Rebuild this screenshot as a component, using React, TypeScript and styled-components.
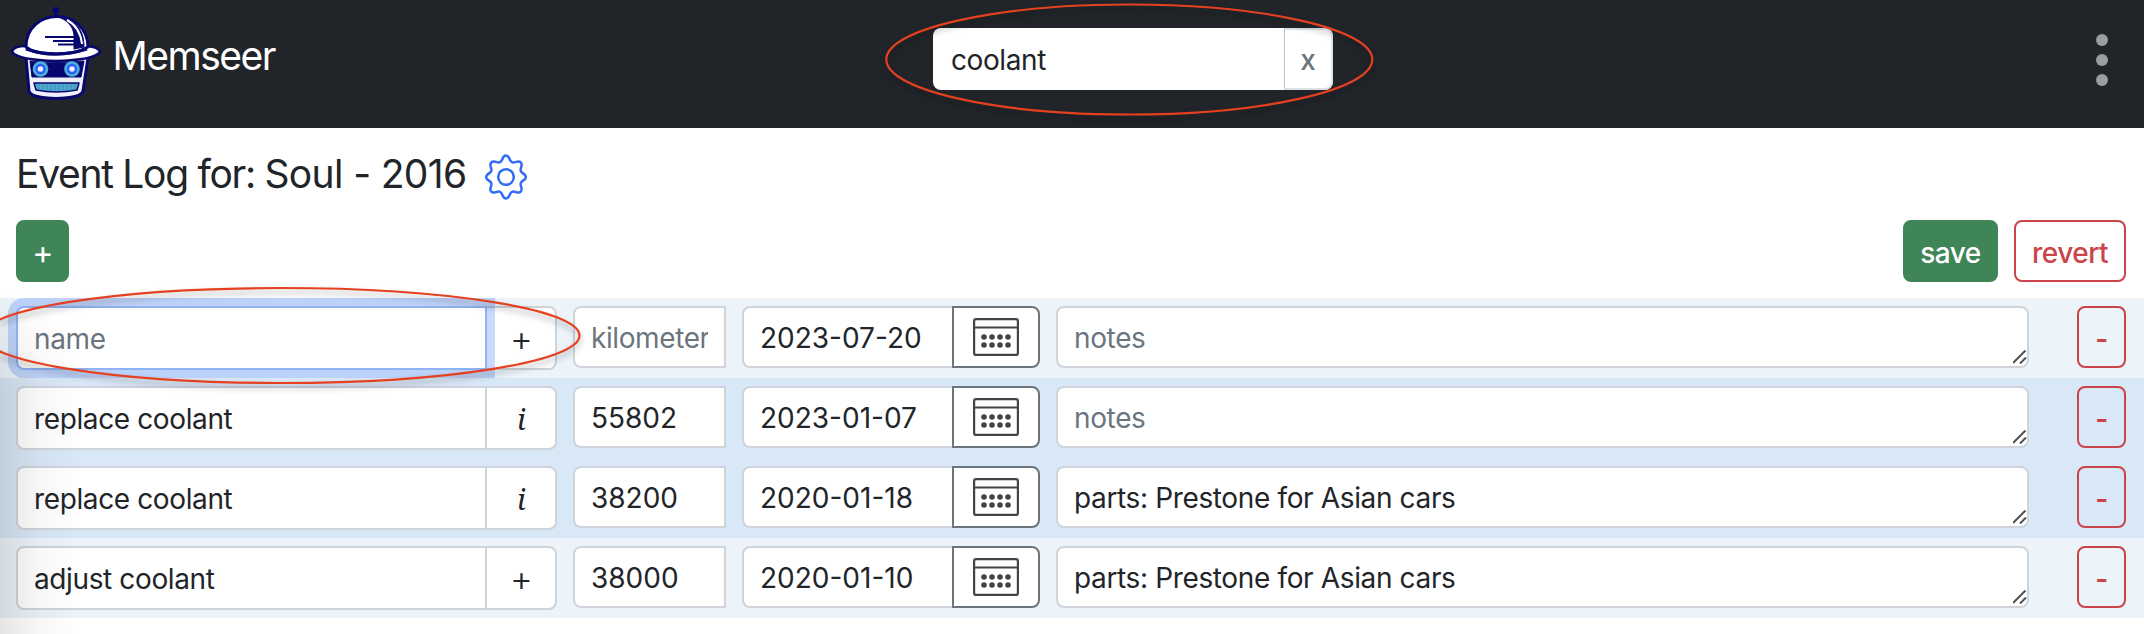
import React from 'react';
import styled, { createGlobalStyle, css } from 'styled-components';

const Global = createGlobalStyle`
  *, *::before, *::after { box-sizing: border-box; }
  body { margin: 0; background: #fff; color: #212529; font-family: Inter, "Liberation Sans", sans-serif; font-size: 28px; line-height: 42px; }
  button, input, textarea { font: inherit; color: inherit; margin: 0; }
`;

const Page = styled.div`
  position: relative;
  width: 2144px;
  height: 634px;
  overflow: hidden;
`;

const Header = styled.header`
  display: grid;
  grid-template-columns: 933px 400px 1fr;
  height: 128px;
  background: #212529;
`;

const Brand = styled.div`
  display: flex;
  align-items: flex-start;
  padding: 4px 0 0 8px;
  color: #fff;
`;

const BrandName = styled.span`
  margin: 28px 0 0 8.5px;
  font-size: 39px;
  line-height: 48px;
  font-weight: 430;
  letter-spacing: -1.5px;
`;

const Search = styled.div`
  display: flex;
  height: 62px;
  margin-top: 28px;
  border-radius: 8px;
  background: #fff;
  overflow: hidden;
`;

const SearchInput = styled.input`
  flex: 1;
  min-width: 0;
  border: 0;
  padding: 2px 18px 0;
  outline: 0;
  background: transparent;
  letter-spacing: -0.4px;
`;

const ClearButton = styled.button`
  width: 49px;
  border: 2px solid #dee2e6;
  border-left: 1px solid #bcc0c4;
  border-radius: 0 8px 8px 0;
  padding: 2px 0 0;
  background: #fff;
  color: #6c757d;
  font-weight: 450;
`;

const Menu = styled.div`
  display: flex;
  flex-direction: column;
  align-items: flex-end;
  gap: 8px;
  padding: 34px 36px 0 0;
`;

const Dot = styled.i`
  width: 12px;
  height: 12px;
  border-radius: 50%;
  background: #9b9d9e;
`;

const TitleBar = styled.div`
  display: flex;
  align-items: center;
  height: 92px;
  padding: 0 16px;
  & > svg { margin-top: 5px; }
`;

const Title = styled.h1`
  margin: 0 18px 0 0;
  font-size: 39px;
  line-height: 48px;
  font-weight: 420;
  letter-spacing: -1.3px;
`;

const Subject = styled.span`
  letter-spacing: -0.65px;
`;

const Actions = styled.div`
  display: flex;
  gap: 16px;
  height: 78px;
  padding: 0 18px 0 16px;
`;

const Spacer = styled.div`
  flex: 1;
`;

const Button = styled.button<{ $w: number; $danger?: boolean }>`
  width: ${p => p.$w}px;
  height: 62px;
  border: 2px solid ${p => (p.$danger ? '#cb444a' : '#408558')};
  border-radius: 8px;
  padding: 3px 0 0;
  background: ${p => (p.$danger ? 'transparent' : '#408558')};
  color: ${p => (p.$danger ? '#cb444a' : '#fff')};
  font-weight: 470;
  letter-spacing: -0.5px;
`;

const AddButton = styled(Button)`
  font-size: 32px;
  font-weight: 420;
`;

const RemoveButton = styled(Button)`
  margin-left: 32px;
  font-weight: 560;
`;

const Row = styled.div<{ $known?: boolean }>`
  display: grid;
  grid-template-columns: 541px 153px 298px 973px 81px;
  column-gap: 16px;
  height: 80px;
  padding: 8px 0 0 16px;
  background: ${p => (p.$known ? '#d9e8f7' : '#ecf4fa')};
`;

const Group = styled.div<{ $h: number }>`
  display: flex;
  height: ${p => p.$h}px;
`;

const field = css`
  border: 2px solid #ced4da;
  background: #fff;
  outline: 0;
  &::placeholder { color: #6c757d; opacity: 1; }
`;

const NameInput = styled.input<{ $focused?: boolean }>`
  ${field}
  width: 471px;
  padding: 2px 16px 0;
  border-radius: 8px 0 0 8px;
  letter-spacing: -0.38px;
  ${p => p.$focused && css`
    position: relative;
    z-index: 1;
    border-color: #8fb3f5;
    box-shadow: 0 0 0 8px rgba(49, 108, 244, 0.25);
  `}
`;

const NameButton = styled.button`
  ${field}
  width: 72px;
  margin-left: -2px;
  padding: 2px 0 0 1px;
  border-radius: 0 8px 8px 0;
`;

const InfoGlyph = styled.em`
  font-family: "Noto Serif", "Liberation Serif", serif;
  font-size: 29px;
`;

const PlusGlyph = styled.span`
  font-size: 35px;
  font-weight: 350;
`;

const DistanceInput = styled.input`
  ${field}
  height: 62px;
  min-width: 0;
  padding: 2px 16px 0;
  border-radius: 8px 0 0 8px;
  &::placeholder { letter-spacing: -0.4px; }
`;

const DateInput = styled.input`
  ${field}
  width: 210px;
  padding: 2px 16px 0;
  border-right: 0;
  border-radius: 8px 0 0 8px;
`;

const CalendarButton = styled.button`
  display: flex;
  align-items: center;
  justify-content: center;
  width: 88px;
  padding: 0;
  border: 2px solid #6c757d;
  border-radius: 0 8px 8px 0;
  background: #fff;
`;

const Notes = styled.textarea`
  ${field}
  height: 62px;
  padding: 9px 16px 0;
  border-radius: 8px;
  resize: none;
  overflow: hidden;
  letter-spacing: -0.36px;
`;

const NotesCell = styled.div`
  position: relative;
  display: grid;
`;

const Grip = styled.svg`
  position: absolute;
  right: 2px;
  top: 44px;
`;

const EdgeShade = styled.div`
  position: absolute;
  left: 0;
  top: 290px;
  width: 80px;
  height: 344px;
  background: linear-gradient(90deg, rgba(0, 0, 0, 0.1), rgba(0, 0, 0, 0.03) 50%, rgba(0, 0, 0, 0));
  mask-image: linear-gradient(180deg, transparent, #000 100px);
  z-index: 2;
`;

const Marks = styled.svg`
  position: absolute;
  inset: 0;
  z-index: 3;
  pointer-events: none;
  filter: drop-shadow(0 4px 3px rgba(0, 0, 0, 0.35));
`;

const Logo = () => (
  <svg width="96" height="100" viewBox="8 4 96 100">
    <g stroke="#07076f" strokeLinejoin="round">
      <circle cx="56" cy="10.500" r="3" fill="#07076f" />
      <path d="M56 11V19" strokeWidth="3" />
      <path d="M26 58 29 91Q31 98 56 98.500Q81 98 83 91L88 58Z" fill="#f0f0fa" strokeWidth="3" />
      <path d="M12 52Q13 46 26 46H87Q99 47 100 52Q94 60 56 61Q18 60 12 52Z" fill="#fff" strokeWidth="2.500" />
      <path d="M26 47C26 7 87 6 88 47Q76 54 56 54Q34 54 26 47Z" fill="#fff" strokeWidth="3" />
      <path d="M61 18C78 21 84 32 84 47L74 49V35C73 27 69 22 61 18Z" fill="#07076f" strokeWidth="1" />
      <path d="M67 20Q80 27 82 44" stroke="#fff" fill="none" strokeWidth="2" />
      <path d="M26 49Q56 59 87 49" fill="none" strokeWidth="3" />
      <path d="M45 37H74M53 41H74M58 44.500H74" strokeWidth="1.800" />
      <path d="M30 61Q56 64 84 61L81 77H32Z" fill="#07076f" strokeWidth="1" />
      <path d="M34 83H79L77 90Q56 94 36 90Z" fill="#4fa8cc" strokeWidth="1.500" />
      <path d="M39 84V90M43 84V91M47 84V91M51 84V91M55 84V91M59 84V91M63 84V91M67 84V91M71 84V91M75 84V90" stroke="#2d86b4" strokeWidth=".6" />
    </g>
    {[40.5, 72].map(x => (
      <g key={x}>
        <circle cx={x} cy="69" r="7.800" fill="#4fb0dc" />
        <circle cx={x} cy="69" r="5.200" fill="#2d5df2" />
        <circle cx={x} cy="69" r="2.800" fill="#e8ecff" />
      </g>
    ))}
  </svg>
);

const Gear = () => (
  <svg width="42" height="46" viewBox="0 0 42 46" fill="none" stroke="#316cf4" strokeWidth="2.500" strokeLinejoin="round">
    <circle cx="21" cy="23" r="7.800" />
    <path d="M21 1.500C25 1.500 24 7 27 8.200C30 9.500 33 5.500 35.700 8.300C38.500 11 34.600 14 35.800 17C37 20 40.800 19.500 40.800 23C40.800 26.500 37 26 35.800 29C34.600 32 38.500 35 35.700 37.700C33 40.500 30 36.500 27 37.800C24 39 25 44.500 21 44.500C17 44.500 18 39 15 37.800C12 36.500 9 40.500 6.300 37.700C3.500 35 7.400 32 6.200 29C5 26 1.200 26.500 1.200 23C1.200 19.500 5 20 6.200 17C7.400 14 3.500 11 6.300 8.300C9 5.500 12 9.500 15 8.200C18 7 17 1.500 21 1.500Z" />
  </svg>
);

const Calendar = () => (
  <svg width="46" height="38" viewBox="0 0 46 38" fill="none" stroke="#444" strokeWidth="2.200">
    <rect x="1.100" y="1.100" width="43.800" height="35.800" rx="2" />
    <path d="M1 9.500H45" />
    <g fill="#444" stroke="none">
      {[11, 19, 27, 35].map(x => [19, 27].map(y => <circle key={`${x}-${y}`} cx={x} cy={y} r="2.800" />))}
    </g>
  </svg>
);

const events = [
  { name: '', known: false, distance: '', date: '2023-07-20', notes: '' },
  { name: 'replace coolant', known: true, distance: '55802', date: '2023-01-07', notes: '' },
  { name: 'replace coolant', known: true, distance: '38200', date: '2020-01-18', notes: 'parts: Prestone for Asian cars' },
  { name: 'adjust coolant', known: false, distance: '38000', date: '2020-01-10', notes: 'parts: Prestone for Asian cars' },
];

export default function App() {
  return (
    <Page>
      <Global />
      <Header>
        <Brand><Logo /><BrandName>Memseer</BrandName></Brand>
        <Search>
          <SearchInput defaultValue="coolant" />
          <ClearButton>x</ClearButton>
        </Search>
        <Menu><Dot /><Dot /><Dot /></Menu>
      </Header>
      <TitleBar><Title>Event Log for: <Subject>Soul - 2016</Subject></Title><Gear /></TitleBar>
      <Actions>
        <AddButton $w={53}>+</AddButton>
        <Spacer />
        <Button $w={95}>save</Button>
        <Button $w={112} $danger>revert</Button>
      </Actions>
      {events.map((e, i) => (
        <Row key={i} $known={e.known}>
          <Group $h={64}>
            <NameInput placeholder="name" defaultValue={e.name} $focused={i === 0} />
            <NameButton>{e.known ? <InfoGlyph>i</InfoGlyph> : <PlusGlyph>+</PlusGlyph>}</NameButton>
          </Group>
          <DistanceInput placeholder="kilometers" defaultValue={e.distance} />
          <Group $h={62}>
            <DateInput defaultValue={e.date} />
            <CalendarButton><Calendar /></CalendarButton>
          </Group>
          <NotesCell>
            <Notes placeholder="notes" defaultValue={e.notes} />
            <Grip width="14" height="14" viewBox="0 0 14 14" stroke="#555" strokeWidth="2.100">
              <path d="M0 13 12.500 .5M7 13.500 13 7.500" />
            </Grip>
          </NotesCell>
          <RemoveButton $w={49} $danger>-</RemoveButton>
        </Row>
      ))}
      <EdgeShade />
      <Marks width="2144" height="634" fill="none" stroke="#e5401f" strokeWidth="2.200">
        <ellipse cx="1129.300" cy="59.500" rx="243" ry="55" />
        <ellipse cx="281" cy="335.500" rx="298.500" ry="47.500" />
      </Marks>
    </Page>
  );
}
